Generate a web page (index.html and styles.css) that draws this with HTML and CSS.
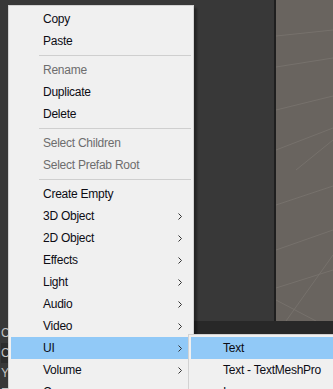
FILE: index.html
```html
<!DOCTYPE html>
<html>
<head>
<meta charset="utf-8">
<link rel="stylesheet" href="styles.css">
</head>
<body>
<div class="app">
  <div class="panel-left">
    <div class="insp">
      <div class="insp-row">C</div>
      <div class="insp-row sel">C</div>
      <div class="insp-row">Y</div>
      <div class="insp-row">E</div>
    </div>
  </div>
  <div class="panel-mid"></div>
  <div class="divider"></div>
  <div class="scene">
    <svg class="scene-lines" width="57" height="321" viewBox="0 0 57 321">
      <g stroke="#8a857f" stroke-width="1" fill="none" opacity="0.4">
        <path d="M0 36 L57 30"/>
        <path d="M0 67 L57 58"/>
        <path d="M0 110 L57 96"/>
        <path d="M0 150 L57 128"/>
        <path d="M0 205 L57 186"/>
        <path d="M0 250 L57 230"/>
        <path d="M0 288 L57 270"/>
        <path d="M10 321 L57 255"/>
        <path d="M0 300 L40 321"/>
        <path d="M20 170 L57 140"/>
      </g>
    </svg>
  </div>
  <div class="bottom-bar"></div>
</div>

<div class="menu main-menu">
  <div class="item">Copy</div>
  <div class="item">Paste</div>
  <div class="sep"></div>
  <div class="item disabled">Rename</div>
  <div class="item">Duplicate</div>
  <div class="item">Delete</div>
  <div class="sep"></div>
  <div class="item disabled">Select Children</div>
  <div class="item disabled">Select Prefab Root</div>
  <div class="sep"></div>
  <div class="item">Create Empty</div>
  <div class="item sub">3D Object<svg class="arr" width="4" height="7" viewBox="0 0 4 7"><path d="M0.5 0.5 L3.5 3.5 L0.5 6.5" stroke="#333" fill="none"/></svg></div>
  <div class="item sub">2D Object<svg class="arr" width="4" height="7" viewBox="0 0 4 7"><path d="M0.5 0.5 L3.5 3.5 L0.5 6.5" stroke="#333" fill="none"/></svg></div>
  <div class="item sub">Effects<svg class="arr" width="4" height="7" viewBox="0 0 4 7"><path d="M0.5 0.5 L3.5 3.5 L0.5 6.5" stroke="#333" fill="none"/></svg></div>
  <div class="item sub">Light<svg class="arr" width="4" height="7" viewBox="0 0 4 7"><path d="M0.5 0.5 L3.5 3.5 L0.5 6.5" stroke="#333" fill="none"/></svg></div>
  <div class="item sub">Audio<svg class="arr" width="4" height="7" viewBox="0 0 4 7"><path d="M0.5 0.5 L3.5 3.5 L0.5 6.5" stroke="#333" fill="none"/></svg></div>
  <div class="item sub">Video<svg class="arr" width="4" height="7" viewBox="0 0 4 7"><path d="M0.5 0.5 L3.5 3.5 L0.5 6.5" stroke="#333" fill="none"/></svg></div>
  <div class="item sub active">UI<svg class="arr" width="4" height="7" viewBox="0 0 4 7"><path d="M0.5 0.5 L3.5 3.5 L0.5 6.5" stroke="#333" fill="none"/></svg></div>
  <div class="item sub">Volume<svg class="arr" width="4" height="7" viewBox="0 0 4 7"><path d="M0.5 0.5 L3.5 3.5 L0.5 6.5" stroke="#333" fill="none"/></svg></div>
  <div class="item">Camera</div>
</div>

<div class="menu sub-menu">
  <div class="item active">Text</div>
  <div class="item">Text - TextMeshPro</div>
  <div class="item">Image</div>
</div>
</body>
</html>
```

FILE: styles.css
```css
html, body {
  margin: 0;
  padding: 0;
}
body {
  width: 333px;
  height: 389px;
  overflow: hidden;
  position: relative;
  background: #383838;
  font-family: "Liberation Sans", Arial, sans-serif;
  font-size: 12px;
}
.app {
  display: grid;
  grid-template-columns: 8px 266px 2px 57px;
  grid-template-rows: 321px 68px;
  width: 333px;
  height: 389px;
}
.panel-left {
  grid-row: 1 / 3;
  background: #383838;
  display: flex;
  flex-direction: column;
  justify-content: flex-end;
  overflow: hidden;
}
.insp {
  display: flex;
  flex-direction: column;
  height: 66px;
}
.insp-row {
  height: 20px;
  line-height: 20px;
  color: #c4c4c4;
  font-size: 12px;
  margin-left: 1px;
}
.insp-row.sel {
  background: #2c2c2c;
}
.panel-mid {
  background: #383838;
}
.divider {
  background: #1f1f1f;
}
.scene {
  background: #69645f;
  overflow: hidden;
}
.scene-lines {
  display: block;
}
.bottom-bar {
  grid-column: 2 / 5;
  background: #282828;
}

.menu {
  position: absolute;
  background: #f0f0f0;
  border: 1px solid #d2d2d2;
  padding: 2px;
  box-shadow: 3px 3px 2px rgba(0, 0, 0, 0.35);
}
.main-menu {
  left: 8px;
  top: 5px;
  width: 180px;
}
.sub-menu {
  left: 188px;
  top: 334px;
  width: 180px;
}
.item {
  height: 22px;
  line-height: 22px;
  padding-left: 32px;
  color: #0c0c14;
  position: relative;
  white-space: nowrap;
  letter-spacing: -0.25px;
}
.item.disabled {
  color: #6d6d6d;
}
.item.active {
  background: #91c9f7;
}
.arr {
  position: absolute;
  right: 9px;
  top: 8px;
}
.sep {
  height: 1px;
  margin: 3px 0 3px 28px;
  background: #cfcfcf;
}
```
